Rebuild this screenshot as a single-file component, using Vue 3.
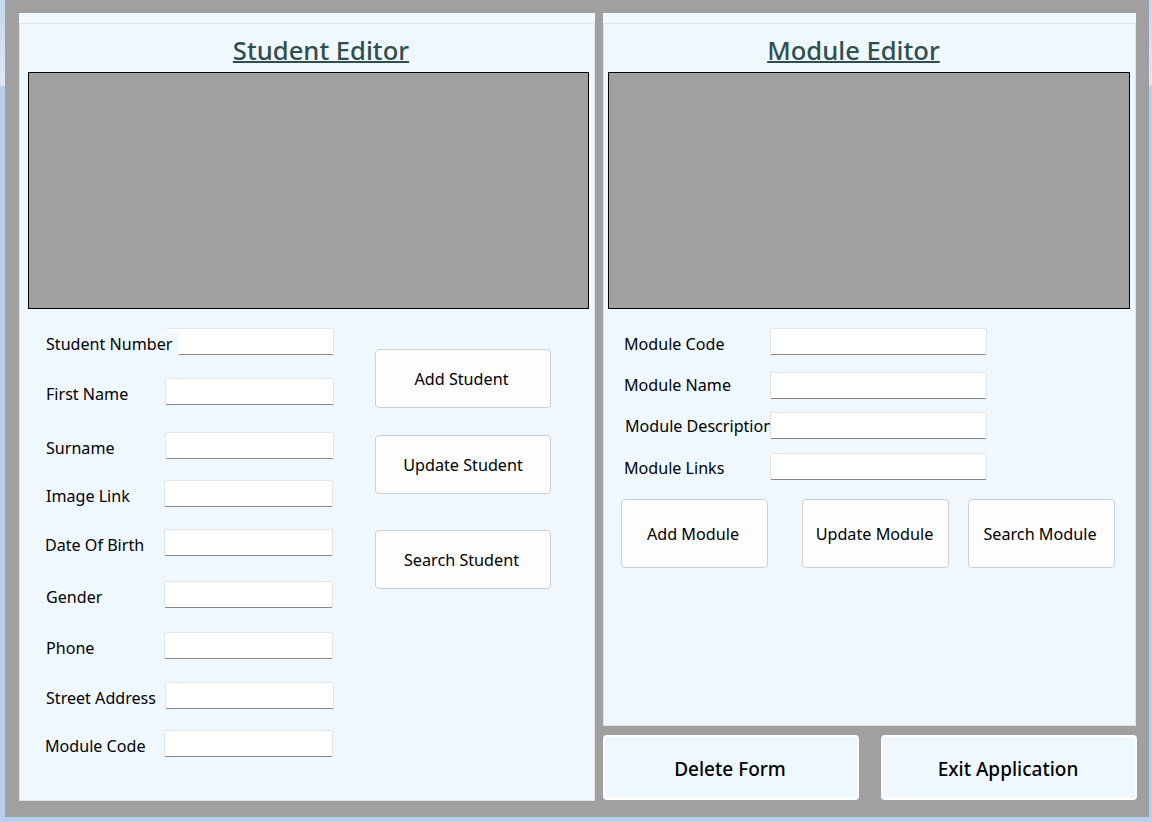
<script setup>
const students = [
  { label: "Student Number", top: 20, labelLeft: 26, inputLeft: 145, masked: true },
  { label: "First Name", top: 24, labelLeft: 26, inputLeft: 145 },
  { label: "Surname", top: 28, labelLeft: 26, inputLeft: 145 },
  { label: "Image Link", top: 22, labelLeft: 26, inputLeft: 144 },
  { label: "Date Of Birth", top: 23, labelLeft: 25, inputLeft: 144 },
  { label: "Gender", top: 26, labelLeft: 26, inputLeft: 144 },
  { label: "Phone", top: 25, labelLeft: 26, inputLeft: 144 },
  { label: "Street Address", top: 24, labelLeft: 26, inputLeft: 145 },
  { label: "Module Code", top: 22, labelLeft: 25, inputLeft: 144 },
];

const modules = [
  { label: "Module Code", top: 20, labelLeft: 20, inputLeft: 166 },
  { label: "Module Name", top: 18, labelLeft: 20, inputLeft: 166, labelTop: 0 },
  { label: "Module Description", top: 14, labelLeft: 21, inputLeft: 166, labelTop: 1 },
  { label: "Module Links", top: 15, labelLeft: 20, inputLeft: 166, labelTop: 2 },
];

const rowStyle = (f) => ({ marginTop: f.top + "px", paddingLeft: f.labelLeft + "px" });
const labelStyle = (f) => ({
  width: (f.masked ? f.inputLeft + 14 : f.inputLeft) - f.labelLeft + "px",
  marginTop: (f.labelTop ?? 3) + "px",
});
</script>

<template>
  <div class="page">
    <div class="stage">
      <section class="panel student">
        <div class="panel-body">
          <h1 class="title">Student Editor</h1>
          <div class="preview"></div>
          <div class="student-body">
            <div class="fields">
              <div v-for="f in students" :key="f.label" class="row" :style="rowStyle(f)">
                <label class="label" :class="{ masked: f.masked }" :style="labelStyle(f)">{{ f.label }}</label>
                <input class="input student-input" :class="{ pulled: f.masked }" type="text" />
              </div>
            </div>
            <div class="student-actions">
              <button class="btn nudged">Add Student</button>
              <button class="btn update-student">Update Student</button>
              <button class="btn nudged search-student">Search Student</button>
            </div>
          </div>
        </div>
      </section>

      <div class="right">
        <section class="panel module">
          <div class="panel-body">
            <h1 class="title">Module Editor</h1>
            <div class="preview"></div>
            <div class="fields">
              <div v-for="f in modules" :key="f.label" class="row" :style="rowStyle(f)">
                <label class="label" :style="labelStyle(f)">{{ f.label }}</label>
                <input class="input module-input" type="text" />
              </div>
            </div>
            <div class="module-actions">
              <button class="btn nudged">Add Module</button>
              <button class="btn update-module">Update Module</button>
              <button class="btn nudged search-module">Search Module</button>
            </div>
          </div>
        </section>
        <div class="footer">
          <button class="big">Delete Form</button>
          <button class="big">Exit Application</button>
        </div>
      </div>
    </div>
  </div>
</template>

<style>
html,
body {
  margin: 0;
  overflow: hidden;
}
</style>

<style scoped>
* {
  box-sizing: border-box;
}

.page {
  width: 1152px;
  height: 822px;
  padding: 0 3px 5px 5px;
  background: linear-gradient(180deg, #c3d7ee 0, #dfe9f5 85px, #b6cfea 87px);
  font-family: "Noto Sans", "Open Sans", sans-serif;
  color: #000;
}

.stage {
  display: flex;
  align-items: flex-start;
  height: 817px;
  padding: 13px 0 0 14px;
  background: #a0a0a0;
}

.panel {
  padding-top: 10px;
  background: #f0f8ff;
}

.panel-body {
  height: 100%;
  border: 1px solid #dfe3e6;
}

.student {
  width: 576px;
  height: 788px;
}

.right {
  width: 534px;
  margin-left: 8px;
}

.module {
  width: 533px;
  height: 713px;
}

.title {
  margin: 8px 0 0;
  height: 40px;
  color: #2f4f4f;
  font-size: 25.6px;
  line-height: 38px;
  font-weight: 500;
  text-align: center;
  text-decoration: underline;
  text-decoration-thickness: 2px;
}
.student .title {
  padding-left: 28px;
}
.module .title {
  padding-right: 32px;
}

.preview {
  height: 237px;
  background: #a0a0a0;
  border: 1px solid #000;
}
.student .preview {
  margin: 0 5px 0 8px;
}
.module .preview {
  margin: 0 5px 0 4px;
}

.student-body {
  display: flex;
}
.fields {
  display: flex;
  flex-direction: column;
}
.module .fields {
  height: 171px;
}
.student .fields {
  width: 355px;
}

.row {
  display: flex;
  align-items: flex-start;
  height: 26px;
}

.label {
  flex: none;
  height: 23px;
  overflow: hidden;
  font-size: 16.1px;
  line-height: 25px;
  white-space: nowrap;
}
.label.masked {
  position: relative;
  z-index: 1;
  background: #f0f8ff;
}

.input {
  flex: none;
  height: 27px;
  margin-top: -1px;
  padding: 0 8px;
  background: #fff;
  border: 1px solid #e4e4e4;
  border-bottom: 1px solid #868686;
  border-radius: 2px;
  outline: none;
}
.student-input {
  width: 169px;
}
.student-input.pulled {
  margin-left: -14px;
}
.module-input {
  width: 217px;
}

.student-actions {
  display: flex;
  flex-direction: column;
  padding-top: 40px;
}

.btn {
  height: 59px;
  padding: 0;
  background: #fdfdfd;
  border: 1px solid #d0d0d0;
  border-radius: 4px;
  color: #000;
  font-family: inherit;
  font-size: 16.2px;
}
.btn.nudged {
  padding-right: 3px;
}
.student-actions .btn {
  width: 176px;
}
.update-student {
  margin-top: 27px;
}
.search-student {
  margin-top: 36px;
}

.module-actions {
  display: flex;
  padding: 19px 0 0 17px;
}
.module-actions .btn {
  width: 147px;
  height: 69px;
}
.update-module {
  margin-left: 34px;
  padding-right: 2px;
}
.search-module {
  margin-left: 19px;
}

.footer {
  display: flex;
  gap: 22px;
  margin-top: 9px;
}

.big {
  width: 256px;
  height: 65px;
  padding: 2px 2px 0 0;
  background: #f0f8ff;
  border: 2px solid #fff;
  border-radius: 4px;
  color: #000;
  font-family: inherit;
  font-size: 19px;
  font-weight: 500;
}
</style>
